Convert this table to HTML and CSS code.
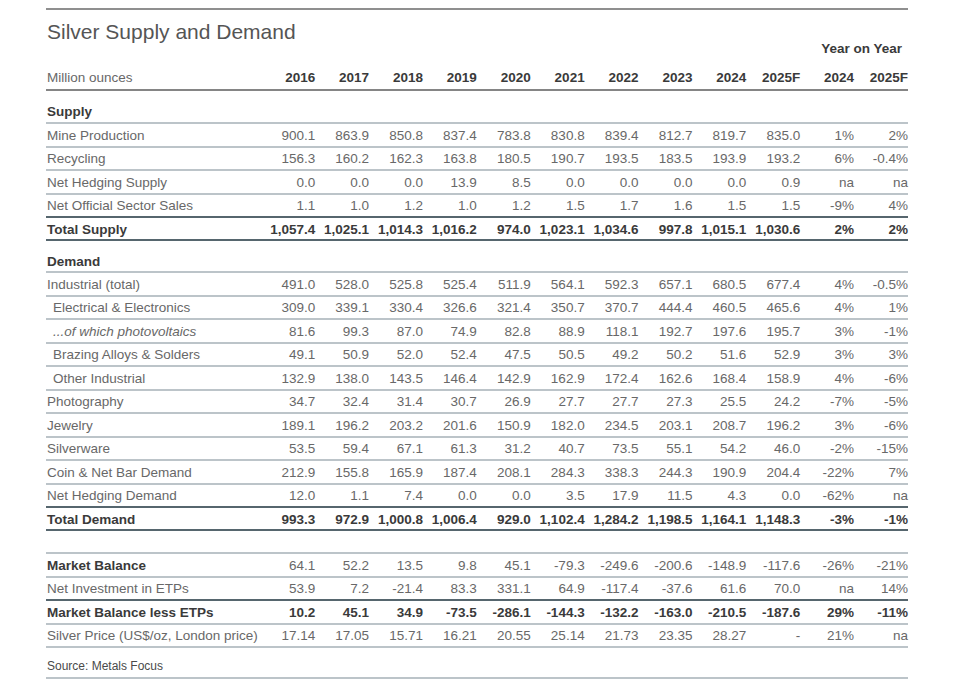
FILE: index.html
```html
<!DOCTYPE html>
<html lang="en">
<head>
<meta charset="utf-8">
<title>Silver Supply and Demand</title>
<link rel="stylesheet" href="styles.css">
</head>
<body>
<div class="page">
  <h1 class="title">Silver Supply and Demand</h1>
  <div class="table">
    <div class="row yoy-row"><span class="yoy">Year on Year</span></div>
    <div class="row head">
      <span class="label">Million ounces</span>
      <span>2016</span><span>2017</span><span>2018</span><span>2019</span><span>2020</span><span>2021</span><span>2022</span><span>2023</span><span>2024</span><span>2025F</span><span>2024</span><span>2025F</span>
    </div>

    <div class="row section"><span class="label">Supply</span></div>
    <div class="row"><span class="label">Mine Production</span><span>900.1</span><span>863.9</span><span>850.8</span><span>837.4</span><span>783.8</span><span>830.8</span><span>839.4</span><span>812.7</span><span>819.7</span><span>835.0</span><span>1%</span><span>2%</span></div>
    <div class="row"><span class="label">Recycling</span><span>156.3</span><span>160.2</span><span>162.3</span><span>163.8</span><span>180.5</span><span>190.7</span><span>193.5</span><span>183.5</span><span>193.9</span><span>193.2</span><span>6%</span><span>-0.4%</span></div>
    <div class="row"><span class="label">Net Hedging Supply</span><span>0.0</span><span>0.0</span><span>0.0</span><span>13.9</span><span>8.5</span><span>0.0</span><span>0.0</span><span>0.0</span><span>0.0</span><span>0.9</span><span>na</span><span>na</span></div>
    <div class="row"><span class="label">Net Official Sector Sales</span><span>1.1</span><span>1.0</span><span>1.2</span><span>1.0</span><span>1.2</span><span>1.5</span><span>1.7</span><span>1.6</span><span>1.5</span><span>1.5</span><span>-9%</span><span>4%</span></div>
    <div class="row total"><span class="label">Total Supply</span><span>1,057.4</span><span>1,025.1</span><span>1,014.3</span><span>1,016.2</span><span>974.0</span><span>1,023.1</span><span>1,034.6</span><span>997.8</span><span>1,015.1</span><span>1,030.6</span><span>2%</span><span>2%</span></div>

    <div class="row section section-demand"><span class="label">Demand</span></div>
    <div class="row"><span class="label">Industrial (total)</span><span>491.0</span><span>528.0</span><span>525.8</span><span>525.4</span><span>511.9</span><span>564.1</span><span>592.3</span><span>657.1</span><span>680.5</span><span>677.4</span><span>4%</span><span>-0.5%</span></div>
    <div class="row"><span class="label sub">Electrical &amp; Electronics</span><span>309.0</span><span>339.1</span><span>330.4</span><span>326.6</span><span>321.4</span><span>350.7</span><span>370.7</span><span>444.4</span><span>460.5</span><span>465.6</span><span>4%</span><span>1%</span></div>
    <div class="row"><span class="label sub italic">...of which photovoltaics</span><span>81.6</span><span>99.3</span><span>87.0</span><span>74.9</span><span>82.8</span><span>88.9</span><span>118.1</span><span>192.7</span><span>197.6</span><span>195.7</span><span>3%</span><span>-1%</span></div>
    <div class="row"><span class="label sub">Brazing Alloys &amp; Solders</span><span>49.1</span><span>50.9</span><span>52.0</span><span>52.4</span><span>47.5</span><span>50.5</span><span>49.2</span><span>50.2</span><span>51.6</span><span>52.9</span><span>3%</span><span>3%</span></div>
    <div class="row"><span class="label sub">Other Industrial</span><span>132.9</span><span>138.0</span><span>143.5</span><span>146.4</span><span>142.9</span><span>162.9</span><span>172.4</span><span>162.6</span><span>168.4</span><span>158.9</span><span>4%</span><span>-6%</span></div>
    <div class="row"><span class="label">Photography</span><span>34.7</span><span>32.4</span><span>31.4</span><span>30.7</span><span>26.9</span><span>27.7</span><span>27.7</span><span>27.3</span><span>25.5</span><span>24.2</span><span>-7%</span><span>-5%</span></div>
    <div class="row"><span class="label">Jewelry</span><span>189.1</span><span>196.2</span><span>203.2</span><span>201.6</span><span>150.9</span><span>182.0</span><span>234.5</span><span>203.1</span><span>208.7</span><span>196.2</span><span>3%</span><span>-6%</span></div>
    <div class="row"><span class="label">Silverware</span><span>53.5</span><span>59.4</span><span>67.1</span><span>61.3</span><span>31.2</span><span>40.7</span><span>73.5</span><span>55.1</span><span>54.2</span><span>46.0</span><span>-2%</span><span>-15%</span></div>
    <div class="row"><span class="label">Coin &amp; Net Bar Demand</span><span>212.9</span><span>155.8</span><span>165.9</span><span>187.4</span><span>208.1</span><span>284.3</span><span>338.3</span><span>244.3</span><span>190.9</span><span>204.4</span><span>-22%</span><span>7%</span></div>
    <div class="row"><span class="label">Net Hedging Demand</span><span>12.0</span><span>1.1</span><span>7.4</span><span>0.0</span><span>0.0</span><span>3.5</span><span>17.9</span><span>11.5</span><span>4.3</span><span>0.0</span><span>-62%</span><span>na</span></div>
    <div class="row total"><span class="label">Total Demand</span><span>993.3</span><span>972.9</span><span>1,000.8</span><span>1,006.4</span><span>929.0</span><span>1,102.4</span><span>1,284.2</span><span>1,198.5</span><span>1,164.1</span><span>1,148.3</span><span>-3%</span><span>-1%</span></div>

    <div class="spacer"></div>
    <div class="row"><span class="label strong">Market Balance</span><span>64.1</span><span>52.2</span><span>13.5</span><span>9.8</span><span>45.1</span><span>-79.3</span><span>-249.6</span><span>-200.6</span><span>-148.9</span><span>-117.6</span><span>-26%</span><span>-21%</span></div>
    <div class="row"><span class="label">Net Investment in ETPs</span><span>53.9</span><span>7.2</span><span>-21.4</span><span>83.3</span><span>331.1</span><span>64.9</span><span>-117.4</span><span>-37.6</span><span>61.6</span><span>70.0</span><span>na</span><span>14%</span></div>
    <div class="row key"><span class="label">Market Balance less ETPs</span><span>10.2</span><span>45.1</span><span>34.9</span><span>-73.5</span><span>-286.1</span><span>-144.3</span><span>-132.2</span><span>-163.0</span><span>-210.5</span><span>-187.6</span><span>29%</span><span>-11%</span></div>
    <div class="row last"><span class="label">Silver Price (US$/oz, London price)</span><span>17.14</span><span>17.05</span><span>15.71</span><span>16.21</span><span>20.55</span><span>25.14</span><span>21.73</span><span>23.35</span><span>28.27</span><span>-</span><span>21%</span><span>na</span></div>
    <div class="source">Source: Metals Focus</div>
  </div>
</div>
</body>
</html>
```

FILE: styles.css
```css
html, body {
  margin: 0;
  padding: 0;
  background: #ffffff;
}

body {
  font-family: "Liberation Sans", Arial, sans-serif;
  color: #686868;
}

.page {
  width: 862px;
  margin-left: 46px;
  padding-top: 8px;
}

.title {
  margin: 0;
  border-top: 2px solid #8f8f8f;
  padding-top: 12px;
  padding-left: 1px;
  font-size: 21px;
  line-height: 20px;
  font-weight: normal;
  color: #555555;
  height: 20px;
}

.table {
  font-size: 13.5px;
}

.row {
  display: grid;
  grid-template-columns: 1fr repeat(12, 53.9px);
  align-items: center;
  box-sizing: border-box;
  height: 23.5px;
  border-top: 2px solid #bcc4c9;
  line-height: 16px;
  white-space: nowrap;
}

.row > span {
  text-align: right;
  padding-top: 2px;
}

.row > .label {
  text-align: left;
  padding-left: 1px;
}

.label.sub {
  padding-left: 7px;
}

.label.italic {
  font-style: italic;
}

.label.strong {
  font-weight: bold;
  color: #3a3a3a;
}

.yoy-row {
  height: 14px;
  border-top: none;
  line-height: 14px;
}

.row > .yoy {
  grid-column: 12 / 14;
  text-align: right;
  padding-top: 0;
  padding-right: 6px;
  font-weight: bold;
  color: #3a3a3a;
}

.head {
  height: 35px;
  border-top: none;
  border-bottom: 2px solid #858585;
  align-items: end;
  padding-bottom: 3px;
}

.head > span {
  font-weight: bold;
  color: #3a3a3a;
}

.head > .label {
  font-weight: normal;
  color: #686868;
}

.section {
  height: 31px;
  border-top: none;
  align-items: end;
  padding-bottom: 2px;
}

.section-demand {
  height: 30px;
  padding-bottom: 1px;
}

.section > .label {
  font-weight: bold;
  color: #3a3a3a;
}

.total {
  height: 25px;
  border-top: 2px solid #56666e;
  border-bottom: 2px solid #56666e;
}

.total > span {
  padding-top: 3px;
}

.total > span,
.key > span {
  font-weight: bold;
  color: #3a3a3a;
}

.key {
  border-top-color: #56666e;
}

.last {
  height: 25.5px;
  border-bottom: 2px solid #bcc4c9;
}

.spacer {
  height: 21px;
}

.source {
  box-sizing: border-box;
  height: 31px;
  padding-left: 1px;
  padding-bottom: 4px;
  display: flex;
  align-items: flex-end;
  font-size: 12px;
  line-height: 14px;
  color: #4a4a4a;
  border-bottom: 2px solid #bcc4c9;
}
```
